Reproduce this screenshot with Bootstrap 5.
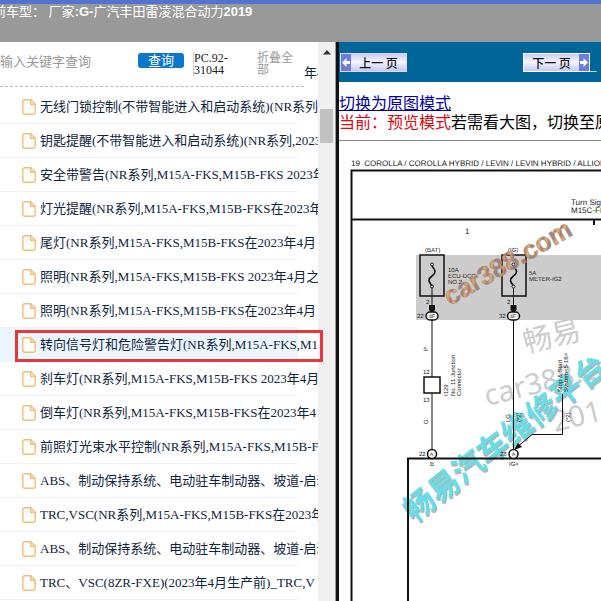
<!DOCTYPE html>
<html lang="zh-CN">
<head>
<meta charset="utf-8">
<meta name="viewport" content="width=device-width, initial-scale=1">
<title>维修资料</title>
<link href="https://cdn.jsdelivr.net/npm/bootstrap@5.3.0/dist/css/bootstrap.min.css" rel="stylesheet">
<style>
body { font-family: "Liberation Serif", "Noto Sans CJK SC", serif; font-size: 13px; color: #10243f; line-height: 14px; }
.top-bar { height: 42px; background: #999; border-top: 4px solid #5472cf; font-family: "Liberation Sans", "Noto Sans CJK SC", sans-serif; font-size: 13px; line-height: 16px; }
.top-bar p { margin-left: -7px; white-space: pre; }
.side { width: 336px; }
.side-main { flex: 1 1 0; min-width: 0; }
.search-bar { height: 45px; width: 304px; border-bottom: 1px dashed #bbb; }
.search-box { width: 138px; padding: 0; border: 0; font-family: "Noto Sans CJK SC", sans-serif; font-size: 13px; }
.search-box::placeholder { color: #999; opacity: 1; }
.search-btn { width: 46px; height: 15px; padding: 0; font-size: 13px; line-height: 14px; border-radius: 3px; border: 0; background: #0a76cc; color: #fff; margin-top: 11px; }
.code-note { width: 64px; margin: 10px 0 0 9px; font-size: 12px; line-height: 12px; border-left: 1px solid #ccc; color: #222; }
.fold-link { width: 38px; margin-top: 10px; font-size: 12px; line-height: 12px; color: #999; text-decoration: none; }
.doc-list { margin: 3px 20px 0 0; }
.doc-row { height: 34px; border-bottom: 1px solid #eff0f1; padding-left: 22px; }
.doc-row a { flex: 1 1 0; min-width: 0; white-space: nowrap; overflow: hidden; color: #10243f; text-decoration: none; line-height: 20px; margin-right: -20px; gap: 4px; }
.doc-row svg { flex: none; }
.picked { background: #ebf6fe; }
.picked-frame { left: 15px; right: -25px; top: 2px; height: 32px; border: 3px solid #e4393c; z-index: 2; pointer-events: none; }
.scroll-track { width: 18px; background: #f0f0f0; border-right: 1px solid #999; }
.scroll-thumb { width: 13px; height: 34px; margin-top: 54px; background: #c1c1c1; }
.viewer { border-left: 3px solid #111; font-family: "Liberation Serif", "Noto Sans CJK SC", serif; }
.page-bar { height: 40px; background: #069; padding-left: 1px; }
.page-btn { height: 19px; width: 67px; padding: 0; border: 1px solid #dcdcfa; background: linear-gradient(#c9c9fb, #f6f5ff 45%, #c6c6f5); color: #111; font: 500 12px "Noto Sans CJK SC", sans-serif; white-space: pre; }
.page-btn svg { flex: none; }
.next-btn { margin-left: 116px; border-color: #fff; }
.mode-text { font-size: 16px; line-height: 19px; color: #000; margin-top: 12px; height: 46px; white-space: nowrap; }
.mode-text a { color: #00a; text-decoration: underline; }
.now-mode { color: #d9090f; }
.diagram { border-top: 1px solid #888; }
.diagram svg { font-family: "Liberation Sans", "Noto Sans CJK SC", sans-serif; text-rendering: geometricPrecision; }
</style>
</head>
<body class="bg-white">
<svg width="0" height="0" class="position-absolute" aria-hidden="true">
  <symbol id="doc" viewBox="0 0 14 16"><path d="M2.5.8H8.7L13.2 5.3V13.500Q13.200 15.200 11.500 15.200H2.500Q.8 15.200.8 13.500V2.500Q.8.8 2.500.8ZM8.700.8V5.300H13.200" fill="#fffdf9" stroke="#f3bd78" stroke-width="1.400"/></symbol>
</svg>
<div class="vh-100 d-flex flex-column overflow-hidden">
  <header class="top-bar text-white flex-shrink-0 overflow-hidden"><p class="mb-0">前车型：&nbsp;厂家<b>:G-</b>广汽丰田雷凌混合动力<b>2019</b></p></header>
  <main class="d-flex flex-grow-1 overflow-hidden">
    <aside class="side d-flex flex-shrink-0">
      <div class="side-main">
        <div class="d-flex">
          <form class="search-bar d-flex align-items-start flex-shrink-0" onsubmit="return false">
            <input class="search-box mt-2 pt-1" type="text" placeholder="输入关键字查询" aria-label="输入关键字查询">
            <button class="search-btn flex-shrink-0" type="submit">查询</button>
            <span class="code-note flex-shrink-0">PC.92-<br>31044</span>
            <a class="fold-link flex-shrink-0" href="#">折叠全部</a>
          </form>
          <span class="overflow-hidden text-nowrap pt-4">年4</span>
        </div>
        <ul class="doc-list list-unstyled mb-0">
          <li class="doc-row d-flex"><a class="d-flex align-items-center" href="#"><svg width="14" height="16"><use href="#doc"/></svg>无线门锁控制(不带智能进入和启动系统)(NR系列</a></li>
          <li class="doc-row d-flex"><a class="d-flex align-items-center" href="#"><svg width="14" height="16"><use href="#doc"/></svg>钥匙提醒(不带智能进入和启动系统)(NR系列,2023</a></li>
          <li class="doc-row d-flex"><a class="d-flex align-items-center" href="#"><svg width="14" height="16"><use href="#doc"/></svg>安全带警告(NR系列,M15A-FKS,M15B-FKS 2023年</a></li>
          <li class="doc-row d-flex"><a class="d-flex align-items-center" href="#"><svg width="14" height="16"><use href="#doc"/></svg>灯光提醒(NR系列,M15A-FKS,M15B-FKS在2023年</a></li>
          <li class="doc-row d-flex"><a class="d-flex align-items-center" href="#"><svg width="14" height="16"><use href="#doc"/></svg>尾灯(NR系列,M15A-FKS,M15B-FKS在2023年4月</a></li>
          <li class="doc-row d-flex"><a class="d-flex align-items-center" href="#"><svg width="14" height="16"><use href="#doc"/></svg>照明(NR系列,M15A-FKS,M15B-FKS 2023年4月之</a></li>
          <li class="doc-row d-flex"><a class="d-flex align-items-center" href="#"><svg width="14" height="16"><use href="#doc"/></svg>照明(NR系列,M15A-FKS,M15B-FKS在2023年4月</a></li>
          <li class="doc-row d-flex picked position-relative"><a class="d-flex align-items-center" href="#"><svg width="14" height="16"><use href="#doc"/></svg>转向信号灯和危险警告灯(NR系列,M15A-FKS,M1</a><span class="picked-frame position-absolute"></span></li>
          <li class="doc-row d-flex"><a class="d-flex align-items-center" href="#"><svg width="14" height="16"><use href="#doc"/></svg>刹车灯(NR系列,M15A-FKS,M15B-FKS 2023年4月</a></li>
          <li class="doc-row d-flex"><a class="d-flex align-items-center" href="#"><svg width="14" height="16"><use href="#doc"/></svg>倒车灯(NR系列,M15A-FKS,M15B-FKS在2023年4</a></li>
          <li class="doc-row d-flex"><a class="d-flex align-items-center" href="#"><svg width="14" height="16"><use href="#doc"/></svg>前照灯光束水平控制(NR系列,M15A-FKS,M15B-F</a></li>
          <li class="doc-row d-flex"><a class="d-flex align-items-center" href="#"><svg width="14" height="16"><use href="#doc"/></svg>ABS、制动保持系统、电动驻车制动器、坡道-启动</a></li>
          <li class="doc-row d-flex"><a class="d-flex align-items-center" href="#"><svg width="14" height="16"><use href="#doc"/></svg>TRC,VSC(NR系列,M15A-FKS,M15B-FKS在2023年</a></li>
          <li class="doc-row d-flex"><a class="d-flex align-items-center" href="#"><svg width="14" height="16"><use href="#doc"/></svg>ABS、制动保持系统、电动驻车制动器、坡道-启动</a></li>
          <li class="doc-row d-flex"><a class="d-flex align-items-center" href="#"><svg width="14" height="16"><use href="#doc"/></svg>TRC、VSC(8ZR-FXE)(2023年4月生产前)_TRC,V</a></li>
        </ul>
      </div>
      <div class="scroll-track flex-shrink-0 d-flex flex-column align-items-center pt-2">
        <svg width="8" height="5" class="flex-shrink-0"><path d="M0 4.500L4 0L8 4.500Z" fill="#333"/></svg>
        <div class="scroll-thumb flex-shrink-0"></div>
      </div>
    </aside>
    <section class="viewer flex-grow-1 overflow-hidden">
      <div class="page-bar d-flex align-items-center text-white">
        <button class="page-btn d-flex align-items-center flex-shrink-0" type="button"><svg width="10" height="17"><path fill="#6c7bdc" d="M0 0H10V17H0Z"/><path fill="#fff" d="M1 8.500L5.500 4V7H9V10H5.500V13Z"/></svg><span class="flex-grow-1">上一 页</span></button>
        <button class="page-btn next-btn d-flex align-items-center flex-shrink-0" type="button"><span class="flex-grow-1">下一 页</span><svg width="10" height="17"><path fill="#6c7bdc" d="M0 0H10V17H0Z"/><path fill="#fff" d="M9 8.500L4.500 4V7H1V10H4.500V13Z"/></svg></button>
        <span class="pt-2">_</span>
      </div>
      <div class="mode-text"><a href="#">切换为原图模式</a><br><span class="now-mode">当前：预览模式</span>若需看大图，切换至原</div>
      <div class="diagram">
        <svg class="d-block" width="600" height="600" viewBox="339 142 600 600" fill="none" stroke="#111">
          <defs><linearGradient id="mix" x1="0" y1="0" x2="7" y2="5" gradientUnits="userSpaceOnUse" spreadMethod="reflect"><stop offset="0" stop-color="#b8605f"/><stop offset=".4" stop-color="#d8b070"/><stop offset=".7" stop-color="#a67b5b"/><stop offset="1" stop-color="#8a76a8"/></linearGradient></defs>
          <path d="M416 256H939V321H416Z" fill="#ccc" stroke="none"/>
          <g stroke="none" fill="#ccc">
            <text transform="translate(526 354) rotate(-14)" font-size="29">畅易</text>
            <text transform="translate(487 407) rotate(-14)" font-size="29" font-family="Noto Sans, sans-serif">car388.com</text>
            <text transform="translate(555 433) rotate(-14)" font-size="29" font-family="Noto Sans, sans-serif">2019</text>
          </g>
          <g stroke="none" font-weight="bold">
            <text transform="translate(415 526) rotate(-38)" font-size="31" fill="#b0b8ba">畅易汽车维修平台</text>
            <text transform="translate(414 524) rotate(-38)" font-size="31" fill="#69dde5">畅易汽车维修平台</text>
          </g>
          <path stroke-width="2" d="M939 171.500H351.500V742M351.500 220.500H939M594 220V226M408 742V459.500H939"/>
          <path stroke-width="1.500" d="M420 256H444V297H420ZM502 256H526V297H502ZM424 378H440V394H424Z"/>
          <path d="M432 289V378M432 394V450M513.500 289V450M562.500 395V435.500H532L516 449"/>
          <path stroke-width="1.600" d="M432 267C436 272 436 274 432 277S428 282 432 287M513.500 267C517.500 272 517.500 274 513.500 277S509.500 282 513.500 287"/>
          <path fill="#111" stroke="none" d="M429 306H435V311L432 314L429 311ZM510.500 306H516.500V311L513.500 314L510.500 311ZM514 451L518 444L522 448Z"/>
          <g fill="#fff"><circle cx="432" cy="265.500" r="1.500"/><circle cx="432" cy="287.500" r="1.500"/><circle cx="513.500" cy="265.500" r="1.500"/><circle cx="513.500" cy="287.500" r="1.500"/></g>
          <g stroke-width="1.500" fill="#eee"><rect x="426" y="313" width="12" height="8" rx="4"/><rect x="507.500" y="313" width="12" height="8" rx="4"/><circle cx="432" cy="455" r="4.500" fill="#fff"/><circle cx="513.500" cy="455" r="4.500" fill="#fff"/></g>
          <g fill="#222" stroke="none" font-size="6">
            <text x="351" y="167" font-size="8">19&#160; COROLLA / COROLLA HYBRID / LEVIN / LEVIN HYBRID / ALLION</text>
            <text x="571" y="206" font-size="8">Turn Signal</text><text x="571" y="214" font-size="8">M15C-FKS</text>
            <text x="465" y="235" font-size="8">1</text>
            <text x="425" y="253">(BAT)</text><text x="508" y="253">(IG)</text>
            <text x="448" y="273">10A</text><text x="448" y="279">ECU-DCC</text><text x="448" y="285">NO.2</text>
            <text x="529" y="276">5A</text><text x="529" y="282">METER-IG2</text>
            <text x="426" y="305">2</text><text x="507" y="305">2</text>
            <text x="417" y="319">22</text><text x="499" y="319">32</text>
            <text x="429" y="319" font-size="5">4F</text><text x="510" y="319" font-size="5">4F</text>
            <text transform="translate(428 352) rotate(-90)">P</text>
            <text x="423" y="375">12</text><text x="423" y="403">13</text>
            <text transform="translate(428 425) rotate(-90)">G</text>
            <text transform="translate(448 397) rotate(-90)">I129</text>
            <text transform="translate(455 397) rotate(-90)">No. 11 Junction</text>
            <text transform="translate(461 397) rotate(-90)">Connector</text>
            <text transform="translate(510 423) rotate(-90)">LG</text>
            <text transform="translate(521 423) rotate(-90)">(*2)</text>
            <text transform="translate(562 393) rotate(-90)">Stop &amp; Start</text>
            <text transform="translate(568 393) rotate(-90)">System&lt;5-18&gt;</text>
            <text transform="translate(570 423) rotate(-90)">(*2)</text>
            <text x="419" y="457">22</text><text x="500" y="457">28</text>
            <text x="430" y="457" font-size="5">A</text><text x="512" y="457" font-size="5">A</text>
            <text x="430" y="467">B</text><text x="509" y="467">IG+</text>
          </g>
          <text transform="translate(450 307) rotate(-30)" font-size="26" font-weight="bold" fill="url(#mix)" stroke="#a8896a" stroke-width=".6" opacity=".9">car388.com</text>
        </svg>
      </div>
    </section>
  </main>
</div>
<script src="https://cdn.jsdelivr.net/npm/bootstrap@5.3.0/dist/js/bootstrap.bundle.min.js"></script>
</body>
</html>
